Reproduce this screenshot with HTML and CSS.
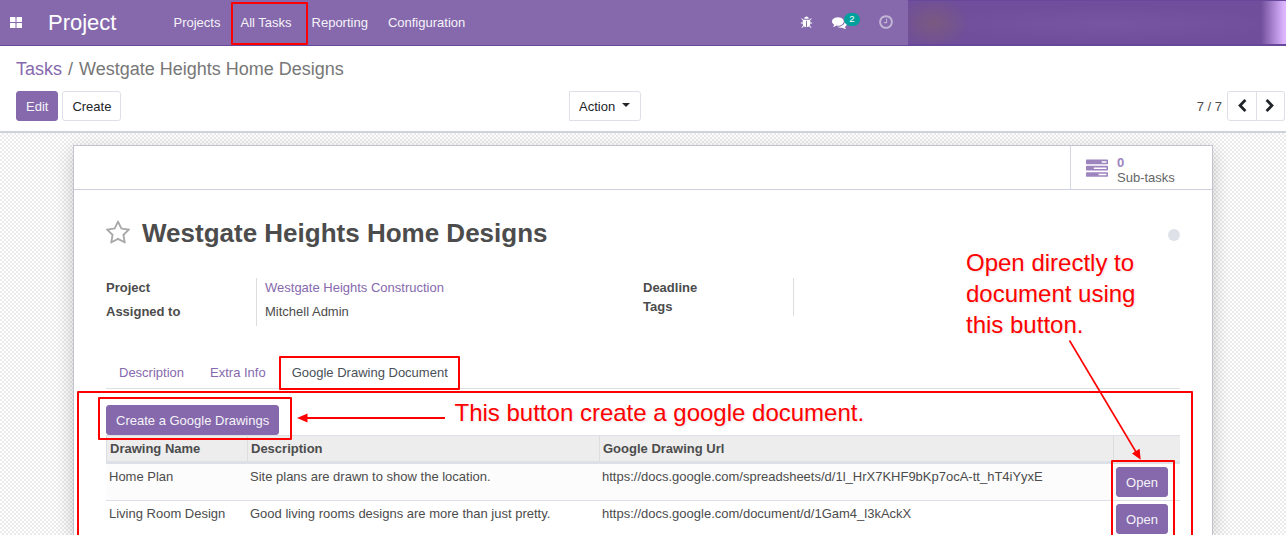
FILE: index.html
```html
<!DOCTYPE html>
<html lang="en">
<head>
<meta charset="utf-8">
<title>Westgate Heights Home Designs</title>
<link rel="stylesheet" href="styles.css">
</head>
<body>
<header class="navbar">
  <svg class="apps" viewBox="0 0 12 11"><path d="M1 0h4q.5 0 .5.5v4q0 .5-.5.5H.5Q0 5 0 4.500V.5Q0 0 .5 0zM7 0h4.500q.5 0 .5.5v4q0 .5-.5.5H7q-.5 0-.5-.5v-4Q6.500 0 7 0zM.5 6H5q.5 0 .5.5v4q0 .5-.5.5H.5q-.5 0-.5-.5v-4Q0 6 .5 6zM7 6h4.500q.5 0 .5.5v4q0 .5-.5.5H7q-.5 0-.5-.5v-4Q6.500 6 7 6z"/></svg>
  <div class="brand">Project</div>
  <nav class="menu"><a>Projects</a><a>All Tasks</a><a>Reporting</a><a>Configuration</a></nav>
  <div class="systray">
    <svg class="icon" viewBox="0 0 1792 1792"><path d="M1696 960q0 26-19 45t-45 19h-224q0 171-67 290l208 209q19 19 19 45t-19 45q-18 19-45 19t-45-19l-198-197q-5 5-15 13t-42 28.500-65 36.500-82 29-97 13v-896h-128v896q-51 0-101.500-13.500t-87-33-66-39-43.500-32.500l-15-14-183 207q-20 21-48 21-24 0-43-16-19-18-20.500-44.500t15.500-46.500l202-227q-58-114-58-274h-224q-26 0-45-19t-19-45 19-45 45-19h224v-294l-173-173q-19-19-19-45t19-45 45-19 45 19l173 173h844l173-173q19-19 45-19t45 19 19 45-19 45l-173 173v294h224q26 0 45 19t19 45zm-480-576h-640q0-133 93.500-226.500t226.500-93.500 226.500 93.500 93.500 226.500z"/></svg>
    <div class="chat">
      <svg class="icon chat-icon" viewBox="0 0 1792 1792"><path d="M1408 768q0 139-94 257t-256.500 186.500-353.500 68.500q-86 0-176-16-124 88-278 128-36 9-86 16h-3q-11 0-20.500-8t-11.500-21q-1-3-1-6.500t.5-6.500 2-6l2.500-5 3.500-5.500 4-5 4.500-5 4-4.500q5-6 23-25t26-29.500 22.500-29 25-38.500 20.500-44q-124-72-195-177t-71-224q0-139 94-257t256.500-186.500 353.500-68.500 353.500 68.500 256.500 186.500 94 257zm384 256q0 120-71 224.500t-195 176.500q10 24 20.500 44t25 38.500 22.500 29 26 29.500 23 25q1 1 4 4.500t4.500 5 4 5 3.500 5.500l2.500 5 2 6 .5 6.500-1 6.500q-3 14-13 22t-22 7q-50-7-86-16-154-40-278-128-90 16-176 16-271 0-472-132 58 4 88 4 161 0 309-45t264-129q125-92 192-212t67-254q0-77-23-152 129 71 204 178t75 230z"/></svg>
      <span class="badge">2</span>
    </div>
    <svg class="icon clock" viewBox="0 0 1792 1792"><path d="M1024 544v448q0 14-9 23t-23 9h-320q-14 0-23-9t-9-23v-64q0-14 9-23t23-9h224v-352q0-14 9-23t23-9h64q14 0 23 9t9 23zm416 352q0-148-73-273t-198-198-273-73-273 73-198 198-73 273 73 273 198 198 273 73 273-73 198-198 73-273zm224 0q0 209-103 385.500t-279.500 279.500-385.500 103-385.500-103-279.500-279.500-103-385.500 103-385.500 279.500-279.500 385.500-103 385.500 103 279.500 279.500 103 385.500z"/></svg>
  </div>
  <div class="user"></div>
</header>

<section class="control">
  <div class="crumbs"><a>Tasks</a><span class="sep">/</span><span>Westgate Heights Home Designs</span></div>
  <div class="actions">
    <div class="left"><button class="btn primary">Edit</button><button class="btn">Create</button></div>
    <button class="btn action">Action<i class="caret"></i></button>
    <div class="pager"><span class="count">7 / 7</span><div class="group">
      <button class="btn nav prev"><svg viewBox="0 0 1792 1792"><path d="M1427 301l-531 531 531 531q19 19 19 45t-19 45l-166 166q-19 19-45 19t-45-19l-742-742q-19-19-19-45t19-45l742-742q19-19 45-19t45 19l166 166q19 19 19 45t-19 45z"/></svg></button><button class="btn nav next"><svg viewBox="0 0 1792 1792"><path transform="matrix(-1 0 0 1 1792 0)" d="M1427 301l-531 531 531 531q19 19 19 45t-19 45l-166 166q-19 19-45 19t-45-19l-742-742q-19-19-19-45t19-45l742-742q19-19 45-19t45 19l166 166q19 19 19 45t-19 45z"/></svg></button>
    </div></div>
  </div>
</section>

<main class="content">
  <article class="sheet">
    <div class="button-box">
      <div class="stat">
        <svg viewBox="0 0 1792 1792"><path d="M1024 1408h640v-128h-640v128zm-384-512h1024v-128h-1024v128zm640-512h384v-128h-384v128zm512 832v256q0 26-19 45t-45 19h-1664q-26 0-45-19t-19-45v-256q0-26 19-45t45-19h1664q26 0 45 19t19 45zm0-512v256q0 26-19 45t-45 19h-1664q-26 0-45-19t-19-45v-256q0-26 19-45t45-19h1664q26 0 45 19t19 45zm0-512v256q0 26-19 45t-45 19h-1664q-26 0-45-19t-19-45v-256q0-26 19-45t45-19h1664q26 0 45 19t19 45z"/></svg>
        <div class="stat-text"><b>0</b><span>Sub-tasks</span></div>
      </div>
    </div>
    <div class="title-row">
      <svg class="star" viewBox="0 0 1792 1792"><path d="M1201 1004l306-297-422-62-189-382-189 382-422 62 306 297-73 421 378-199 377 199zm527-357q0 22-26 48l-363 354 86 500q1 7 1 20 0 50-41 50-19 0-40-12l-449-236-449 236q-22 12-40 12-21 0-31.500-14.500t-10.500-35.500q0-6 2-20l86-500-364-354q-25-27-25-48 0-37 56-46l502-73 225-455q19-41 49-41t49 41l225 455 502 73q56 9 56 46z"/></svg>
      <h1>Westgate Heights Home Designs</h1>
      <span class="state"></span>
    </div>
    <div class="fields">
      <div class="labels tall"><b>Project</b><b>Assigned to</b></div>
      <div class="values tall"><a>Westgate Heights Construction</a><span>Mitchell Admin</span></div>
      <div class="labels"><b>Deadline</b><b>Tags</b></div>
      <div class="values"></div>
    </div>
    <div class="tabs"><a>Description</a><a>Extra Info</a><a class="active">Google Drawing Document</a></div>
    <button class="btn primary create">Create a Google Drawings</button>
    <div class="table">
      <div class="row head"><b>Drawing Name</b><b>Description</b><b>Google Drawing Url</b><b></b></div>
      <div class="row odd"><span>Home Plan</span><span>Site plans are drawn to show the location.</span><span>https://docs.google.com/spreadsheets/d/1l_HrX7KHF9bKp7ocA-tt_hT4iYyxE</span><button class="btn primary">Open</button></div>
      <div class="row last"><span>Living Room Design</span><span>Good living rooms designs are more than just pretty.</span><span>https://docs.google.com/document/d/1Gam4_l3kAckX</span><button class="btn primary">Open</button></div>
    </div>
  </article>
</main>

<div class="notes">
  <svg class="marks" viewBox="0 0 1286 535">
    <g class="boxes">
      <rect x="232" y="3" width="75" height="41"/>
      <rect x="280" y="357" width="179" height="32"/>
      <path d="M78 535V392H1192V535"/>
      <rect x="99" y="398" width="192" height="41"/>
      <path d="M1112 535V461H1174V535"/>
      <path d="M445 418H306"/>
      <path class="slant" d="M1069.500 340.500L1136 452"/>
    </g>
    <path class="tip" d="M297 418l10.500-4.500v9zM1140.700 459.700l-8.700-6.300 7.600-4.600z"/>
  </svg>
  <p class="note note-create">This button create a google document.</p>
  <p class="note note-open">Open directly to document using this button.</p>
</div>
</body>
</html>
```
FILE: styles.css
```css
* { box-sizing: border-box; }
body {
  margin: 0;
  width: 1286px;
  height: 535px;
  overflow: hidden;
  display: flex;
  flex-direction: column;
  position: relative;
  font: 13px/20px "Liberation Sans", Arial, sans-serif;
  color: #4c4c4c;
  background: #fff;
}
a { color: #8669ae; }

.navbar {
  height: 46px;
  flex: none;
  display: flex;
  align-items: center;
  background: #8569ac;
  border-bottom: 1px solid #68489a;
  color: #fff;
}
.apps { width: 12px; height: 11px; margin: -1px 0 0 10px; fill: #fff; }
.brand { width: 125px; margin-left: 26px; font-size: 22px; }
.menu { display: flex; gap: 20px; padding-left: .5px; }
.menu a { color: #f5f3f8; }
.systray { display: flex; align-items: center; margin: -1px 0 0 auto; }
.icon { width: 13px; height: 13px; fill: #fff; }
.chat { display: flex; margin-left: 19px; position: relative; }
.chat-icon { width: 15px; height: 15px; }
.badge {
  position: absolute;
  left: 12px;
  top: -2px;
  width: 16px;
  height: 13px;
  border-radius: 7px;
  background: #00a09d;
  font-size: 9.500px;
  line-height: 12px;
  text-align: center;
}
.clock { width: 16px; height: 16px; margin: -1px 14px 0 31px; opacity: .5; }
.user {
  align-self: stretch;
  width: 378px;
  background:
    linear-gradient(90deg, transparent 353px, #dcb4ff 376px),
    radial-gradient(ellipse 36px 26px at 26px 22px, #7a5a80, transparent),
    radial-gradient(ellipse 180px 18px at 200px 23px, #7755a2, transparent),
    #704e9b;
  border: solid #68489a;
  border-width: 1px 0;
}

.control {
  flex: none;
  height: 87px;
  padding: 12px 1px 0 16px;
  border-bottom: 2px solid #ced2da;
}
.crumbs { font-size: 18px; line-height: 22px; color: #777; }
.sep { margin: 0 6px; }
.actions { margin-top: 11px; display: grid; grid-template-columns: 553px 72px 1fr; }
.left { display: flex; gap: 4px; }
.btn {
  height: 30px;
  padding: 2px 9px 0;
  border: 1px solid #dee0e8;
  border-radius: 3px;
  background: #fff;
  color: #212529;
  font: inherit;
  line-height: 26px;
}
.primary { background: #8569ac; border-color: #8569ac; color: #f5f3f8; }
.action { display: flex; align-items: center; border-radius: 0 3px 3px 0; }
.caret { border: 4px solid transparent; border-top-color: #212529; border-bottom: 0; margin: -5px 0 0 7px; }
.pager { display: flex; justify-content: flex-end; }
.count { line-height: 32px; margin-right: 5px; }
.group { display: flex; }
.nav { display: flex; align-items: center; width: 30px; padding: 0 7px; }
.nav svg { width: 14px; height: 14px; fill: #212529; flex: none; }
.prev { border-radius: 3px 0 0 3px; }
.next { width: 28px; padding-left: 6px; border-left: 0; border-radius: 0 3px 3px 0; }

.content {
  flex: 1;
  min-height: 0;
  overflow: hidden;
  padding: 12px 73px 0;
  background: repeating-conic-gradient(#ebebeb 0 25%, #fff 0 50%) 0 0 / 4px 4px;
}
.sheet {
  height: 100%;
  border: 1px solid #c4c3d2;
  border-bottom: 0;
  background: #fff;
  box-shadow: 0 5px 18px rgba(0, 0, 0, .2);
}
.button-box { height: 44px; display: flex; justify-content: flex-end; border-bottom: 1px solid #cfd0dd; }
.stat { width: 142px; display: flex; border-left: 1px solid #d4d6e0; padding-left: 15px; }
.stat svg { width: 22px; height: 22px; margin-top: 12px; fill: #9d84bf; }
.stat-text { display: flex; flex-direction: column; margin: 9px 0 0 9px; line-height: 15px; color: #666; }
.stat b { color: #9d84bf; }

.title-row { display: flex; align-items: center; height: 86px; padding: 0 32px; }
.star { width: 26px; height: 26px; margin: 0 11px 0 -1px; fill: #a8a8a8; }
h1 { margin: 0; font-size: 26px; line-height: 30px; }
.state { width: 12px; height: 12px; border-radius: 50%; background: #dee2e8; margin: 4px 0 0 auto; }

.fields { display: grid; grid-template-columns: 150px 387px 150px 1fr; padding: 0 32px; margin-top: 2px; height: 79px; align-items: start; }
.labels, .values { display: flex; flex-direction: column; line-height: 19px; height: 38px; }
.tall { height: 48px; gap: 5px; }
.values { border-left: 1px solid #ddd; padding-left: 8px; }
.tabs { display: flex; margin: 0 32px; padding-left: 13px; gap: 26px; height: 32px; line-height: 31px; border-bottom: 1px solid #dee0e8; }
.tabs .active { color: #495057; }
.create { display: block; margin: 16px 0 0 32px; }

.table { margin: 0 32px; border-top: 1px solid #dee0e8; }
.row { display: grid; grid-template-columns: 141px 352px 514px 67px; height: 37px; border-bottom: 1px solid #dee0e8; }
.row span { padding: 3px 0 0 3px; }
.row .btn { width: 52px; margin: 3px 0 0 3px; }
.odd { background: #fcfcfc; }
.last { height: 34px; border-bottom: 0; }
.head { height: 28px; background: #ededed; border-bottom: 3px solid #dee0e8; }
.head b { padding: 3px 0 0 3px; border-left: 1px solid #dcdde1; }

.notes { position: absolute; inset: 0; }
.marks { position: absolute; width: 1286px; height: 535px; }
.boxes { fill: none; stroke: #f00; stroke-width: 2; stroke-linejoin: round; }
.slant { stroke-width: 1.600; }
.tip { fill: #f00; }
.note { position: absolute; margin: 0; font-size: 24px; line-height: 31px; color: #f00; text-shadow: 1px 1px 2px rgba(0, 0, 0, .12); }
.note-create { left: 454.500px; top: 397px; white-space: nowrap; }
.note-open { left: 966px; top: 247px; width: 190px; }
```
